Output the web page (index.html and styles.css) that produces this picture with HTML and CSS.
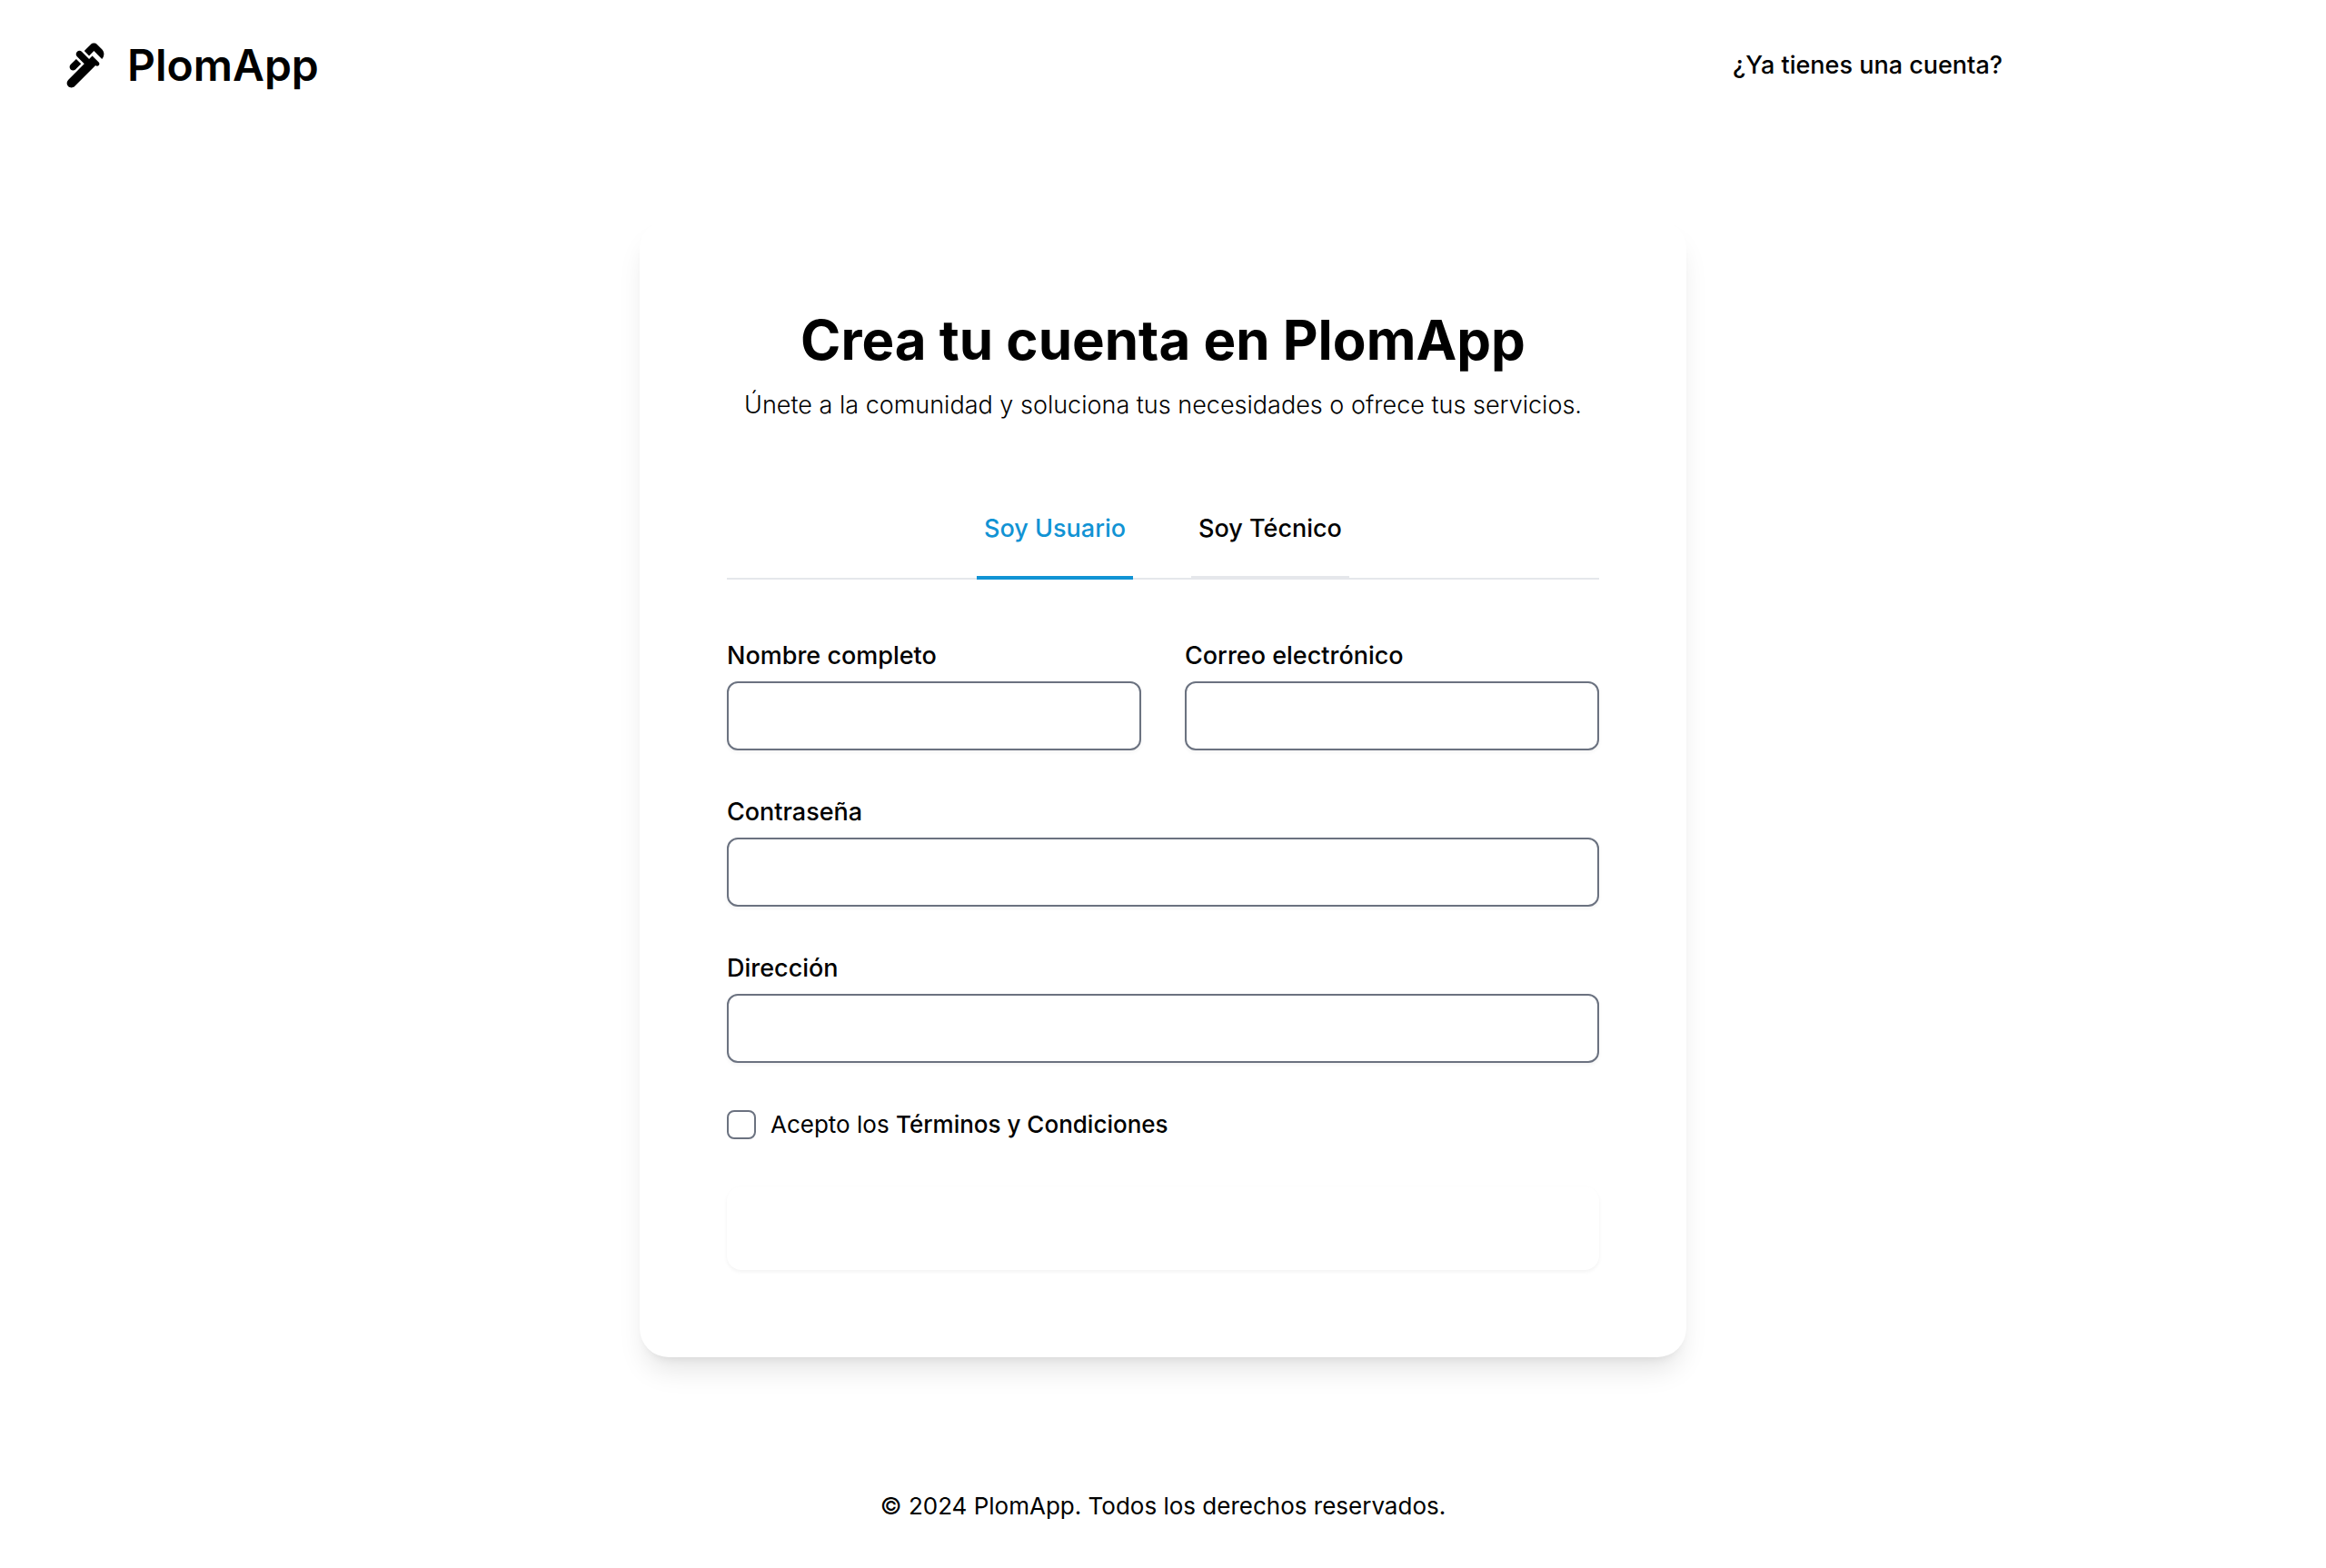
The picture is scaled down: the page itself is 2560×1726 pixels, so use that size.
FILE: index.html
```html
<!DOCTYPE html>
<html lang="es">
<head>
<meta charset="utf-8">
<meta name="viewport" content="width=device-width, initial-scale=1">
<title>PlomApp</title>
<link rel="stylesheet" href="styles.css">
</head>
<body>
<header class="header">
  <div class="brand">
    <svg class="brand-icon" viewBox="0 0 24 24" fill="currentColor" aria-hidden="true">
      <path d="M19.28 4.93l-2.12-2.12c-.78-.78-2.05-.78-2.83 0L11.5 5.64l2.12 2.12 2.12-2.12 3.54 3.54c1.17-1.18 1.17-3.08 0-4.25zM5.49 13.77c.59.59 1.54.59 2.12 0l2.47-2.47-2.12-2.13-2.47 2.47c-.59.59-.59 1.54 0 2.13z"/>
      <path d="M15.04 7.76l-.71.71-.71.71L10.44 6c-.59-.6-1.54-.6-2.12-.01-.59.59-.59 1.54 0 2.12l3.18 3.18-.71.71-6.36 6.36c-.78.78-.78 2.05 0 2.83.78.78 2.05.78 2.83 0L16.45 12c.39.39 1.02.39 1.41 0 .39-.39.39-1.02 0-1.41l-2.82-2.83z"/>
    </svg>
    <span class="brand-name">PlomApp</span>
  </div>
  <a class="account" href="#">¿Ya tienes una cuenta?</a>
</header>
<main class="main">
  <section class="card">
    <h1 class="title">Crea tu cuenta en PlomApp</h1>
    <p class="subtitle">Únete a la comunidad y soluciona tus necesidades o ofrece tus servicios.</p>
    <nav class="tabs">
      <a class="tab tab-active" href="#usuario">Soy Usuario</a>
      <a class="tab" href="#tecnico">Soy Técnico</a>
    </nav>
    <form class="form">
      <div class="row">
        <div class="field">
          <label class="label" for="name">Nombre completo</label>
          <input class="input" id="name" type="text">
        </div>
        <div class="field">
          <label class="label" for="email">Correo electrónico</label>
          <input class="input" id="email" type="email">
        </div>
      </div>
      <div class="field">
        <label class="label" for="password">Contraseña</label>
        <input class="input" id="password" type="password">
      </div>
      <div class="field">
        <label class="label" for="address">Dirección</label>
        <input class="input" id="address" type="text">
      </div>
      <div class="terms">
        <input class="checkbox" id="terms" type="checkbox">
        <label for="terms">Acepto los <a class="terms-link" href="#">Términos y Condiciones</a></label>
      </div>
      <button class="submit" type="submit" aria-label="Crear cuenta"></button>
    </form>
  </section>
</main>
<footer class="footer">© 2024 PlomApp. Todos los derechos reservados.</footer>
</body>
</html>
```
FILE: styles.css
```css
*, *::before, *::after {
  box-sizing: border-box;
}

body {
  margin: 0;
  min-height: 100vh;
  display: flex;
  flex-direction: column;
  background: #fff;
  color: #000;
  font-family: Inter, "Liberation Sans", sans-serif;
  font-size: 27px;
  font-weight: 400;
  line-height: 40px;
}

a {
  color: inherit;
  text-decoration: none;
}

.header {
  display: flex;
  align-items: center;
  justify-content: space-between;
  padding: 42px 356px 44px 64px;
}

.brand {
  display: flex;
  align-items: center;
  gap: 16px;
}

.brand-icon {
  width: 60px;
  height: 60px;
}

.brand-name {
  font-size: 48px;
  font-weight: 600;
  line-height: 60px;
}

.account {
  font-weight: 500;
}

.main {
  flex: 1;
  display: flex;
  align-items: center;
  justify-content: center;
  padding: 96px 32px;
}

.card {
  width: 100%;
  max-width: 1152px;
  padding: 96px;
  border-radius: 32px;
  background: #fff;
  box-shadow: 0 20px 30px -6px rgba(0, 0, 0, 0.1), 0 8px 12px -8px rgba(0, 0, 0, 0.1);
}

.title {
  margin: 0 0 16px;
  font-size: 60px;
  font-weight: 700;
  line-height: 72px;
  text-align: center;
}

.subtitle {
  margin: 0 0 64px;
  font-weight: 300;
  text-align: center;
}

.tabs {
  display: flex;
  justify-content: center;
  gap: 64px;
  margin-bottom: 64px;
  box-shadow: inset 0 -2px #e5e7eb;
}

.tab {
  padding: 32px 8px;
  border-bottom: 4px solid #e5e7eb;
  font-weight: 500;
}

.tab-active {
  border-color: #1193d4;
  color: #1193d4;
}

.form {
  display: flex;
  flex-direction: column;
  gap: 48px;
}

.row {
  display: grid;
  grid-template-columns: 1fr 1fr;
  gap: 48px;
}

.field {
  display: flex;
  flex-direction: column;
  gap: 8px;
}

.label {
  font-weight: 500;
}

.input {
  width: 100%;
  height: 76px;
  padding: 16px 24px;
  border: 2px solid #6b7280;
  border-radius: 12px;
  background: #fff;
  font: inherit;
  box-shadow: 0 2px 4px rgba(0, 0, 0, 0.05);
}

.terms {
  display: flex;
  align-items: center;
  gap: 16px;
  font-size: 26px;
}

.checkbox {
  appearance: none;
  width: 32px;
  height: 32px;
  margin: 0;
  border: 2px solid #6b7280;
  border-radius: 8px;
  background: #fff;
}

.terms-link {
  font-weight: 500;
}

.submit {
  height: 92px;
  border: 0;
  border-radius: 16px;
  background: #fff;
  box-shadow: 0 2px 4px rgba(0, 0, 0, 0.05);
}

.footer {
  padding: 48px;
  font-size: 26px;
  text-align: center;
}
```
